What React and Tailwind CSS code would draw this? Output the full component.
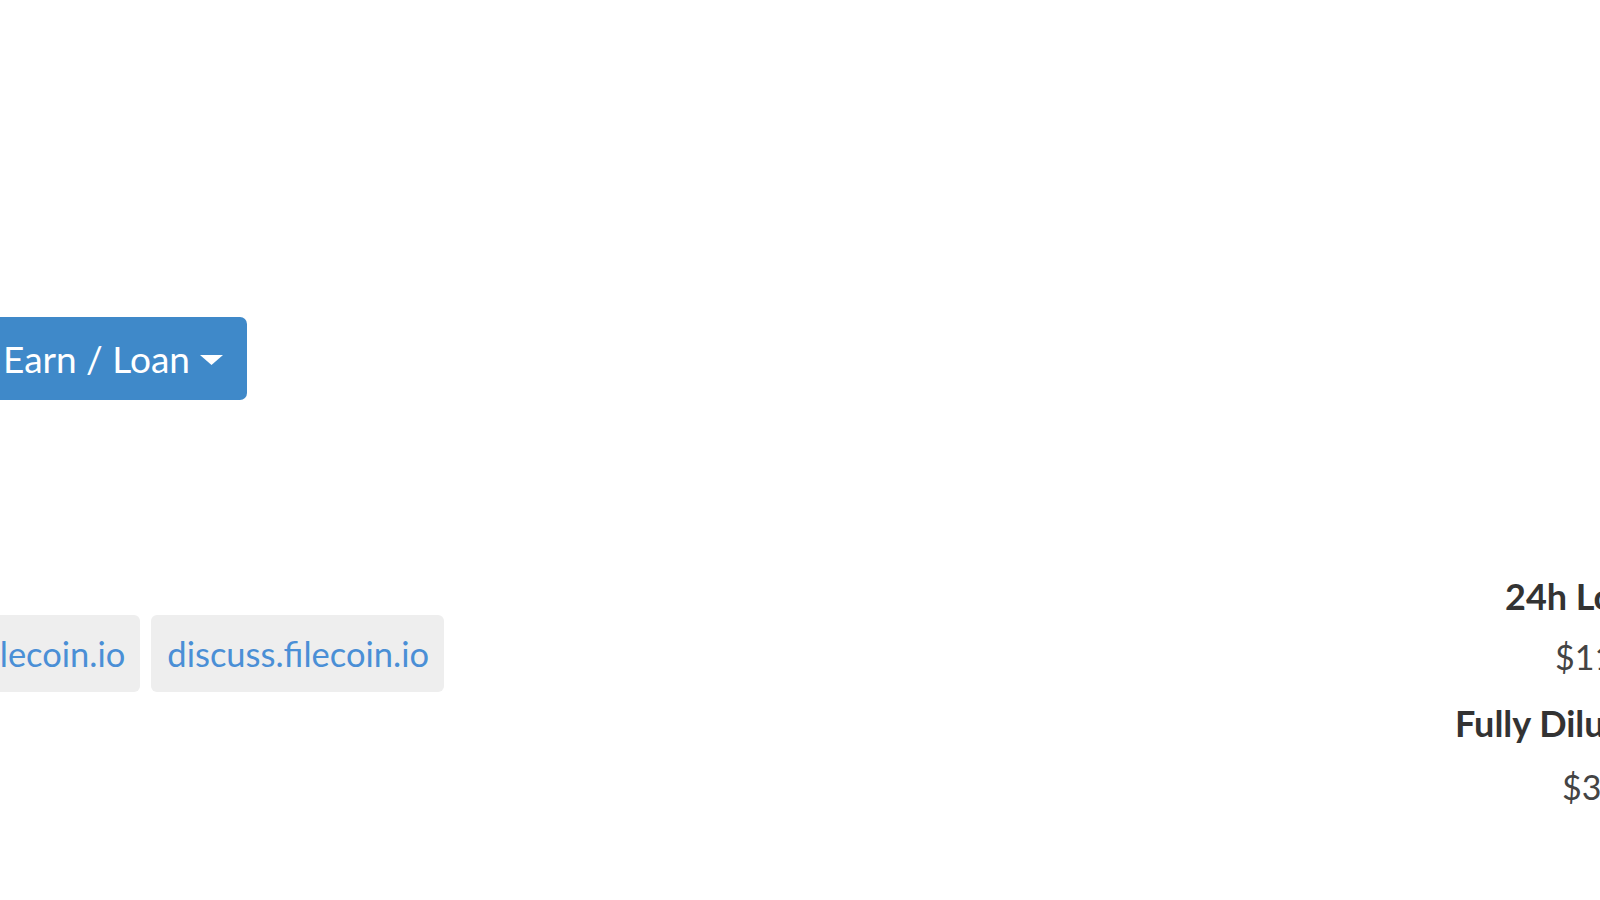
import React from "react";

export default function App() {
  return (
    <div
      className="w-[1600px] h-[900px] overflow-hidden bg-white"
      style={{ fontFamily: "Lato, 'Open Sans', sans-serif" }}
    >
      <div className="pt-[317px]">
        <button className="ml-[-14px] h-[83px] pl-[17px] pr-[24px] rounded-[7px] bg-[#3f89c9] text-white flex items-center gap-[10px] text-[37px] leading-[44px]">
          <span>Earn / Loan</span>
          <svg width="23" height="10" viewBox="0 0 23 10" className="mt-[2px]">
            <path d="M0 0 L23 0 L11.5 10 Z" fill="#ffffff" />
          </svg>
        </button>
      </div>

      <div className="grid grid-cols-[1455px_1fr] mt-[175px]">
        <div className="pt-[40px]">
          <div className="flex gap-[11px] ml-[-36px]">
            <a className="h-[77px] pl-[16px] pr-[15px] rounded-[6px] bg-[#eeeeee] text-[#4a8fd6] text-[34.5px] leading-[43px] flex items-center whitespace-nowrap">
              filecoin.io
            </a>
            <a className="h-[77px] pl-[16px] pr-[15px] rounded-[6px] bg-[#eeeeee] text-[#4a8fd6] text-[34.5px] leading-[43px] flex items-center whitespace-nowrap">
              discuss.filecoin.io
            </a>
          </div>
        </div>
        <div className="whitespace-nowrap text-[36px] leading-[43px]">
          <div className="pl-[50px] font-bold text-[#333333]">24h Low / 24h High</div>
          <div className="pl-[100px] mt-[17px] text-[34px] text-[#444444]">$11.23 / $12.45</div>
          <div className="pl-[0px] mt-[24px] font-bold text-[#333333]">Fully Diluted Valuation</div>
          <div className="pl-[107px] mt-[20px] text-[34px] text-[#444444]">$32,456,789,012</div>
        </div>
      </div>
    </div>
  );
}
